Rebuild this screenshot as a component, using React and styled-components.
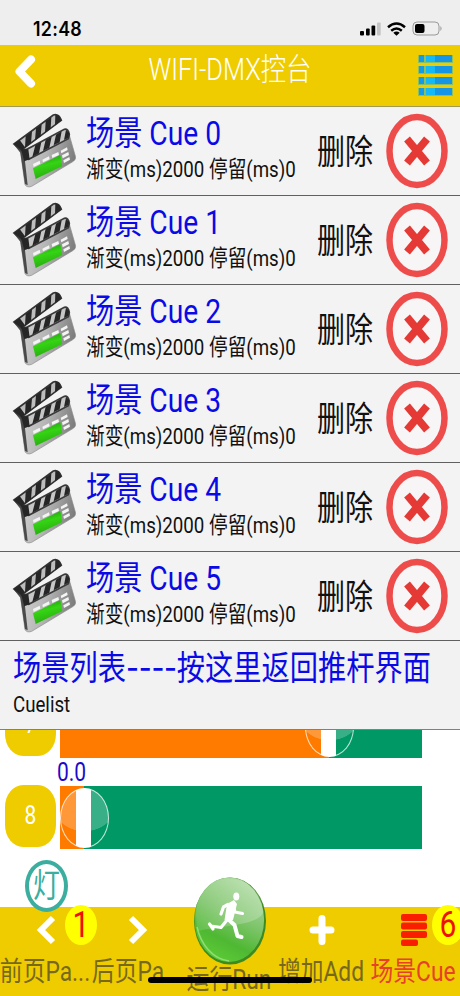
import React from 'react';
import styled, { createGlobalStyle } from 'styled-components';

const GlobalStyle = createGlobalStyle`
    *{
        box-sizing: border-box;
    }
    body{
        margin: 0;
        background: #FFFFFF;
    }
`;

const Screen = styled.div`
    display: flex;
    flex-direction: column;
    width: 460px;
    height: 996px;
    overflow: hidden;
    background: #FFFFFF;
    font-family: Roboto, "Noto Sans CJK SC", sans-serif;
`;

// tall text, every label on the console is stretched vertically
const Label = styled.span`
    display: block;
    flex: none;
    height: ${p => p.$line || p.$size}px;
    font-size: ${p => p.$size}px;
    line-height: ${p => p.$line || p.$size}px;
    font-weight: ${p => p.$weight || 400};
    letter-spacing: ${p => p.$gap || 0}px;
    color: ${p => p.$color || '#111111'};
    white-space: nowrap;
    transform: scaleY(${p => p.$tall || 1.2});
`;

const Dashes = styled.span`
    font-family: Inter, sans-serif;
    letter-spacing: -0.3px;
`;

const StatusBar = styled.div`
    display: flex;
    flex: none;
    align-items: center;
    justify-content: space-between;
    height: 45px;
    padding: 12px 17px 0 33px;
    background: #EEEEEE;
`;

const Clock = styled(Label)`
    font-family: Inter, sans-serif;
`;

const StatusIcons = styled.div`
    display: flex;
    align-items: center;
    gap: 6px;
`;

const Header = styled.div`
    display: flex;
    flex: none;
    justify-content: space-between;
    height: 62px;
    padding: 9px 7px 0 14px;
    background: #EFCC00;
    border-bottom: 1px solid #A09A50;
`;

const Title = styled(Label)`
    margin: 1px 0 0 6px;
`;

const CueRow = styled.div`
    display: flex;
    flex: none;
    height: 89px;
    padding: 0 12px 0 5px;
    background: #F3F3F3;
    border-bottom: 1px solid #606060;
`;

const CueText = styled.div`
    flex: 1;
    padding: 11px 0 0 1px;
`;

const DeleteLabel = styled(Label)`
    margin: 30px 13px 0 0;
`;

const DeleteIcon = styled.svg`
    flex: none;
    margin-top: 6px;
`;

const ListFooter = styled.div`
    flex: none;
    height: 89px;
    padding: 11px 0 0 13px;
    background: #F2F2F2;
    border-bottom: 1px solid #808080;
`;

const Faders = styled.div`
    display: flex;
    flex: none;
    flex-direction: column;
    justify-content: flex-end;
    height: 177px;
    padding: 0 0 58px 5px;
    overflow: hidden;
`;

const Fader = styled.div`
    display: flex;
    flex: none;
    align-items: flex-start;
    gap: 4px;
    height: 63px;
`;

const Channel = styled.div`
    display: flex;
    align-items: center;
    justify-content: center;
    width: 51px;
    height: 62px;
    margin-top: -1px;
    border-radius: 18px / 22px;
    background: #EFCC00;
`;

const Track = styled.div`
    display: flex;
    align-items: center;
    width: 362px;
    height: 63px;
    background: linear-gradient(to right, #FF7B00 ${p => p.$value}px, #009966 ${p => p.$value}px);
`;

const Knob = styled.div`
    width: 49px;
    height: 60px;
    margin-left: ${p => p.$value - 24}px;
    border: 1.5px solid rgba(255, 255, 255, 0.75);
    border-radius: 50%;
    background:
        linear-gradient(to right, transparent 15px, #FFFFFF 15px, #FFFFFF 30px, transparent 30px),
        radial-gradient(ellipse 32px 28px at 50% 25%, rgba(255, 255, 255, 0.22) 98%, transparent 100%);
`;

const FaderValue = styled(Label)`
    margin: 3px 0 0 52px;
`;

const TabBar = styled.div`
    position: relative;
    display: flex;
    flex: none;
    height: 89px;
    background: #EFCC00;
`;

const Tab = styled.div`
    position: relative;
    display: flex;
    flex-direction: column;
    align-items: center;
    width: 92px;
    padding-top: 7px;
`;

const TabLabel = styled(Label)`
    margin: ${p => p.$drop || 13}px 2px 0 0;
`;

const Badge = styled.div`
    position: absolute;
    top: -2px;
    left: ${p => p.$left}px;
    display: flex;
    align-items: center;
    justify-content: center;
    width: 32px;
    height: 40px;
    border-radius: 50%;
    background: #FFFF00;
`;

const LampBadge = styled.div`
    position: absolute;
    top: -47px;
    left: 25px;
    display: flex;
    align-items: center;
    justify-content: center;
    width: 43px;
    height: 52px;
    border: 4px solid #3BAE9F;
    border-radius: 50%;
    background: #FFFFFF;
`;

const RunBall = styled.svg`
    position: absolute;
    top: -32px;
    left: 7px;
`;

const HomeBar = styled.div`
    position: absolute;
    left: 148px;
    bottom: 13px;
    width: 164px;
    height: 6px;
    border-radius: 3px;
    background: #000000;
`;

const Clapper = () => (
    <svg width="80" height="89" viewBox="0 3 240 267">
        <defs>
            <linearGradient id="body" x1="0" x2="1" y1="0.4" y2="0.6">
                <stop offset="0" stopColor="#D8D8D8" />
                <stop offset="0.5" stopColor="#B5B5B5" />
                <stop offset="1" stopColor="#777777" />
            </linearGradient>
            <linearGradient id="green" x1="0" x2="0.3" y1="0" y2="1">
                <stop offset="0" stopColor="#138A0A" />
                <stop offset="0.5" stopColor="#35D414" />
                <stop offset="1" stopColor="#28AD10" />
            </linearGradient>
        </defs>
        <path d="M28 118 L46 133 L60 236 Q66 246 80 241 L205 166 Q214 160 211 150 L190 77 L64 128 Z" fill="url(#body)" stroke="#888" strokeWidth="2" />
        <path d="M28 118 L46 140 L60 234 L68 238 L58 148 L62 130 Z" fill="#4A4A4A" />
        <path d="M27 114 L145 27 Q161 22 169 43 L50 132 Z" fill="#BDBDBD" stroke="#333" strokeWidth="5" />
        <path d="M27 114 L44 102 L60 124 L50 132 Z M62 90 L81 76 L78 112 L60 124 Z M93 67 L110 55 L107 91 L90 103 Z M122 46 L139 34 L137 68 L120 80 Z M151 26 L162 29 L168 44 L150 58 Z" fill="#262626" />
        <path d="M62 132 L178 70 Q190 67 193 86 L190 98 L71 160 Q64 158 62 132 Z" fill="#C6C6C6" stroke="#3A3A3A" strokeWidth="5" />
        <path d="M48 130 L70 130 L74 160 L58 166 Z M91 118 L109 108 L102 142 L82 152 Z M122 101 L140 92 L133 125 L114 135 Z M153 86 L170 76 L164 109 L146 118 Z M183 71 L193 81 L190 96 L177 102 Z" fill="#262626" />
        <path d="M84 174 L104 164 L106 173 L86 183 Z M112 161 L132 151 L134 160 L114 169 Z M140 147 L160 138 L162 147 L142 156 Z M167 134 L186 124 L188 132 L169 142 Z M171 148 L190 138 L192 147 L173 157 Z M175 163 L193 153 L195 161 L177 171 Z" fill="#F4F4F4" />
        <path d="M84 187 L166 147 L172 180 L92 219 Z" fill="url(#green)" />
    </svg>
);

const cues = [0, 1, 2, 3, 4, 5];

const App = () => {
  return (
      <Screen>
        <GlobalStyle />
        <StatusBar>
            <Clock $size={17.8} $weight={600} $tall={1.1} $color="#000000" $gap={0.3}>12:48</Clock>
            <StatusIcons>
                <svg width="21" height="14" viewBox="0 0 21 14">
                    <rect x="0" y="9" width="4" height="4.5" rx="1" />
                    <rect x="6" y="6.5" width="3.7" height="7" rx="1" />
                    <rect x="11.5" y="3.5" width="3.7" height="10" rx="1" />
                    <rect x="17" y="0.5" width="3.7" height="13" rx="1" fill="#C4C4C4" />
                </svg>
                <svg width="19" height="14" viewBox="0 0 19 14" fill="none" stroke="#000" strokeWidth="2.5">
                    <path d="M1 5.2 Q9.5 -2.2 18 5.2" />
                    <path d="M4.2 8.7 Q9.5 4.2 14.8 8.7" />
                    <path d="M6.3 10.7 Q9.5 8.4 12.7 10.7 L9.5 13.8 Z" fill="#000" stroke="none" />
                </svg>
                <svg width="31" height="15" viewBox="0 0 31 15">
                    <rect x="1" y="1" width="26" height="13" rx="4" fill="none" stroke="#999" />
                    <rect x="3" y="3" width="9.5" height="9" rx="2" />
                    <path d="M28.5 5 Q30.5 7.5 28.5 10 Z" fill="#888" />
                </svg>
            </StatusIcons>
        </StatusBar>
        <Header>
            <svg width="22" height="35" viewBox="0 0 22 35" fill="none" stroke="#FFF" strokeWidth="8" strokeLinecap="round" strokeLinejoin="round">
                <path d="M17 5.5 L5.5 17.5 L17 29.5" />
            </svg>
            <Title $size={25.4} $line={28} $color="#FFFFFF" $weight={300}>WIFI-DMX控台</Title>
            <svg width="35" height="43" viewBox="0 0 35 43">
                {[1, 12, 23, 34].map(y => (
                    <g key={y}>
                        <rect x="0" y={y} width="35" height="8" fill="#8CBF60" />
                        <rect x="1" y={y} width="5" height="7" fill="#159BE6" />
                        <rect x="8" y={y} width="9" height="7" fill="#13B8F5" />
                        <rect x="17" y={y} width="17" height="7" fill="#1695E5" />
                    </g>
                ))}
            </svg>
        </Header>
        {cues.map(n => (
            <CueRow key={n}>
                <Clapper />
                <CueText>
                    <Label $size={28.2} $line={32} $color="#0A0AE6">场景 Cue {n}</Label>
                    <Label $size={18.7} $line={40}>渐变(ms)2000 停留(ms)0</Label>
                </CueText>
                <DeleteLabel $size={28} $line={32}>删除</DeleteLabel>
                <DeleteIcon width="62" height="76" viewBox="0 0 62 76" fill="none">
                    <ellipse cx="31" cy="38" rx="27.5" ry="34" fill="#F7F5F5" stroke="#EE4B4B" strokeWidth="6.5" />
                    <path d="M21 26 L41 50 M41 26 L21 50" stroke="#E53935" strokeWidth="7.5" />
                </DeleteIcon>
            </CueRow>
        ))}
        <ListFooter>
            <Label $size={28.25} $line={32} $color="#0A0AE6">场景列表<Dashes>----</Dashes>按这里返回推杆界面</Label>
            <Label $size={18.7} $line={42}>Cuelist</Label>
        </ListFooter>
        <Faders>
            <Fader>
                <Channel><Label $size={20} $color="#FFFFFF">7</Label></Channel>
                <Track $value={269}><Knob $value={269} /></Track>
            </Fader>
            <FaderValue $size={21} $line={25} $color="#1A0ACD">0.0</FaderValue>
            <Fader>
                <Channel><Label $size={21} $color="#FFFFFF">8</Label></Channel>
                <Track $value={24}><Knob $value={24} /></Track>
            </Fader>
        </Faders>
        <TabBar>
            <Tab>
                <svg width="20" height="32" viewBox="0 0 20 32" fill="none" stroke="#FFF" strokeWidth="6">
                    <path d="M17 4 L5 16 L17 28" />
                </svg>
                <Badge $left={65}><Label $size={30} $color="#EE1100">1</Label></Badge>
                <TabLabel $size={22.8} $line={28} $color="#77681F">前页Pa...</TabLabel>
            </Tab>
            <LampBadge><Label $size={27} $line={30} $color="#3BAE9F">灯</Label></LampBadge>
            <Tab>
                <svg width="20" height="32" viewBox="0 0 20 32" fill="none" stroke="#FFF" strokeWidth="6">
                    <path d="M3 4 L15 16 L3 28" />
                </svg>
                <TabLabel $size={22.8} $line={28} $color="#77681F">后页Pa...</TabLabel>
            </Tab>
            <Tab>
                <RunBall width="78" height="92" viewBox="0 0 78 92">
                    <defs>
                        <linearGradient id="ball" x1="0.75" x2="0.35" y1="0" y2="1">
                            <stop offset="0" stopColor="#B4DDA8" />
                            <stop offset="0.45" stopColor="#80C56D" />
                            <stop offset="0.75" stopColor="#4FB833" />
                            <stop offset="1" stopColor="#5CCB35" />
                        </linearGradient>
                        <linearGradient id="gloss" x1="0" x2="1" y1="0" y2="0.6">
                            <stop offset="0" stopColor="#FFFFFF" stopOpacity="0.05" />
                            <stop offset="1" stopColor="#FFFFFF" stopOpacity="0.22" />
                        </linearGradient>
                    </defs>
                    <ellipse cx="39" cy="46" rx="36" ry="43.5" fill="#3C8A20" />
                    <ellipse cx="38.3" cy="44.7" rx="34.8" ry="42.3" fill="url(#ball)" />
                    <path d="M5 40 C6 16 20 4 38 4 C58 4 72 18 72 38 C66 50 36 50 6 56 Z" fill="url(#gloss)" />
                    <path d="M6 52 C10 70 22 84 38 86" fill="none" stroke="#A9E890" strokeWidth="1.5" opacity="0.7" />
                    <g fill="none" stroke="#FFF" strokeLinecap="round" strokeLinejoin="round">
                        <ellipse cx="45.3" cy="21.5" rx="3" ry="4" fill="#FFF" stroke="none" />
                        <path d="M43 25 L46 29 L42 45 L33.5 45 L36 29 Z" fill="#FFF" stroke="none" />
                        <path d="M42 31 L44 37 L51.5 38.5 M37 29.5 L32.5 32 L30 39" strokeWidth="3.2" />
                        <path d="M38 45 L43.5 50 L46.5 61 L50.5 62" strokeWidth="4" />
                        <path d="M36 45 L30 52.5 L20 51 L18.5 49 M20 51 L22 54" strokeWidth="3.2" />
                    </g>
                </RunBall>
                <TabLabel $size={22.8} $line={28} $drop={53} $color="#77681F">运行Run</TabLabel>
            </Tab>
            <Tab>
                <svg width="26" height="32" viewBox="0 0 26 32" stroke="#FFF" strokeWidth="7" strokeLinecap="round">
                    <path d="M13 4.5 V27.5 M4 16 H22" />
                </svg>
                <TabLabel $size={22.8} $line={28} $color="#77681F">增加Add</TabLabel>
            </Tab>
            <Tab>
                <svg width="26" height="32" viewBox="0 0 26 32" fill="#FA1E00">
                    <rect x="0" y="0" width="26" height="7" rx="2" />
                    <rect x="0" y="8.5" width="26" height="7" rx="2" />
                    <rect x="0" y="17" width="26" height="7" rx="2" />
                    <rect x="0" y="25.5" width="17" height="6.5" rx="2" />
                </svg>
                <Badge $left={64}><Label $size={30} $color="#EE1100">6</Label></Badge>
                <TabLabel $size={22.8} $line={28} $color="#E8412A">场景Cue</TabLabel>
            </Tab>
            <HomeBar />
        </TabBar>
      </Screen>
  );
};

export default App;
